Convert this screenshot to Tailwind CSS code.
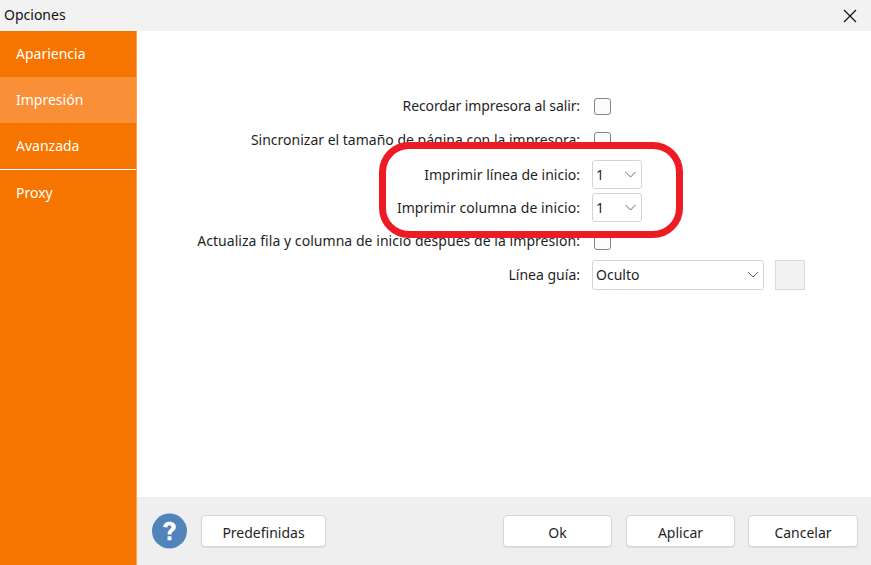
<!DOCTYPE html>
<html>
	<head>
		<title>Opciones</title>
		<script src="https://cdn.jsdelivr.net/npm/@tailwindcss/browser@4"></script>
	</head>
	<body class="bg-white font-['Noto_Sans','Open_Sans',sans-serif] text-[14px] text-[#1f1f1f] overflow-hidden">
		<div class="relative w-[871px] h-[565px] flex flex-col">
			<!-- Title bar -->
			<div class="h-[31px] bg-[#f2f2f2] flex items-center justify-between pl-[4px] pr-[14px]">
				<span class="text-[14px] text-[#111] pb-[2px]">Opciones</span>
				<svg width="14" height="14" viewBox="0 0 14 14" fill="none" stroke="#111" stroke-width="1.2"><path d="M1 1L13 13M13 1L1 13" /></svg>
			</div>

			<div class="flex flex-1 min-h-0">
				<!-- Sidebar -->
				<div class="w-[137px] bg-[#f67400] text-white flex flex-col border-r border-[#f9a45c]">
					<div class="h-[46px] pl-[16px] pb-[2px] flex items-center">Apariencia</div>
					<div class="h-[46px] pl-[16px] pb-[2px] flex items-center bg-[#f98f36]">Impresión</div>
					<div class="h-[46px] pl-[16px] pb-[2px] flex items-center">Avanzada</div>
					<div class="h-[1px] bg-white"></div>
					<div class="h-[46px] pl-[16px] pb-[2px] flex items-center">Proxy</div>
				</div>

				<!-- Main -->
				<div class="flex-1 flex flex-col">
					<div class="flex-1 pt-[58px]">
						<div class="grid grid-cols-[443px_auto] grid-rows-[34px_34px_34px_33px_34px_34px] gap-x-[12px] items-center justify-start">
							<div class="text-right pb-[2px] tracking-[-0.11px]">Recordar impresora al salir:</div>
							<div class="w-[17px] h-[17px] ml-[2px] border-[1.5px] border-[#858585] rounded-[3px] bg-[#fbfbfb]"></div>

							<div class="text-right pb-[2px]">Sincronizar el tamaño de página con la impresora:</div>
							<div class="w-[17px] h-[17px] ml-[2px] border-[1.5px] border-[#858585] rounded-[3px] bg-[#fbfbfb]"></div>

							<div class="text-right">Imprimir línea de inicio:</div>
							<div class="w-[50px] h-[29px] pl-[3px] pr-[5px] border border-[#d4d4d4] rounded-[3px] bg-white flex items-center justify-between">
								<span>1</span>
								<svg width="11" height="7" viewBox="0 0 11 7" fill="none" stroke="#666" stroke-width="1"><path d="M0.5 1L5.5 6L10.5 1" /></svg>
							</div>

							<div class="text-right tracking-[0.07px]">Imprimir columna de inicio:</div>
							<div class="w-[50px] h-[29px] pl-[3px] pr-[5px] border border-[#d4d4d4] rounded-[3px] bg-white flex items-center justify-between">
								<span>1</span>
								<svg width="11" height="7" viewBox="0 0 11 7" fill="none" stroke="#666" stroke-width="1"><path d="M0.5 1L5.5 6L10.5 1" /></svg>
							</div>

							<div class="text-right pb-[2px] tracking-[0.05px]">Actualiza fila y columna de inicio después de la impresión:</div>
							<div class="w-[17px] h-[17px] ml-[2px] border-[1.5px] border-[#858585] rounded-[3px] bg-[#fbfbfb]"></div>

							<div class="text-right pb-[2px]">Línea guía:</div>
							<div class="flex items-center gap-[11px]">
								<div class="w-[172px] h-[30px] pl-[3px] pr-[4px] pb-[1px] border border-[#d4d4d4] rounded-[3px] bg-white flex items-center justify-between">
									<span>Oculto</span>
									<svg width="12" height="7" viewBox="0 0 12 7" fill="none" stroke="#666" stroke-width="1"><path d="M1 1L6 6L11 1" /></svg>
								</div>
								<div class="w-[30px] h-[30px] border border-[#d9d9d9] bg-[#f2f2f2]"></div>
							</div>
						</div>
					</div>

					<!-- Footer -->
					<div class="h-[68px] bg-[#efefef] flex items-center pl-[15px] pr-[13px]">
						<svg width="35" height="36" viewBox="0 0 36 36">
							<circle cx="18" cy="18" r="18" fill="#5284bc" />
							<path d="M11.5 14C11.5 10.5 14.5 8.5 18 8.5C22 8.5 24.5 10.8 24.5 13.8C24.5 18 20 18 20 21.5H16C16 16.5 20 16.5 20 14C20 12.8 19.2 12 18 12C16.6 12 15.8 13 15.8 14.4Z" fill="#fff" />
							<rect x="16" y="23.5" width="4" height="4" fill="#fff" />
						</svg>
						<button class="ml-[14px] w-[125px] h-[32px] pt-[2px] bg-white border border-[#d6d6d6] rounded-[4px] shadow-[0_1px_1px_rgba(0,0,0,0.08)]">Predefinidas</button>
						<button class="ml-auto w-[109px] h-[32px] pt-[2px] bg-white border border-[#d6d6d6] rounded-[4px] shadow-[0_1px_1px_rgba(0,0,0,0.08)]">Ok</button>
						<button class="ml-[14px] w-[109px] h-[32px] pt-[2px] bg-white border border-[#d6d6d6] rounded-[4px] shadow-[0_1px_1px_rgba(0,0,0,0.08)]">Aplicar</button>
						<button class="ml-[13px] w-[110px] h-[32px] pt-[2px] bg-white border border-[#d6d6d6] rounded-[4px] shadow-[0_1px_1px_rgba(0,0,0,0.08)]">Cancelar</button>
					</div>
				</div>
			</div>

			<!-- Red highlight drawn over the form -->
			<div class="absolute left-[379px] top-[142px] w-[304px] h-[96px] border-[7px] border-[#ed1c24] rounded-[30px]"></div>
		</div>
	</body>
</html>
